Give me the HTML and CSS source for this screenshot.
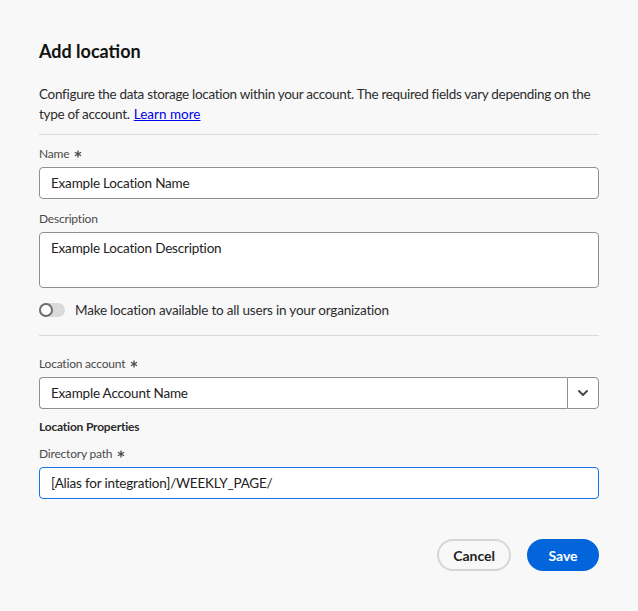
FILE: index.html
```html
<!DOCTYPE html>
<html lang="en">
<head>
    <meta charset="UTF-8">
    <meta name="viewport" content="width=device-width, initial-scale=1.0">
    <title>Add location</title>
    <link rel="stylesheet" href="styles.css">
</head>
<body>
    <div class="dialog">
        <h1 class="title">Add location</h1>
        <p class="intro">Configure the data storage location within your account. The required fields vary depending on the type of account. <a href="#">Learn more</a></p>
        <hr class="divider">

        <div class="field field-first">
            <label class="label" for="name">Name
                <svg class="req" width="8" height="8" viewBox="0 0 8 8"><path d="M4 0.5 V7.5 M0.9 2.2 L7.1 5.8 M0.9 5.8 L7.1 2.2" stroke="#4b4b4b" stroke-width="1.3" fill="none"/></svg>
            </label>
            <input class="textfield" type="text" id="name" value="Example Location Name">
        </div>

        <div class="field">
            <label class="label" for="desc">Description</label>
            <textarea class="textfield textarea" id="desc">Example Location Description</textarea>
        </div>

        <label class="switch-row">
            <span class="switch"><span class="knob"></span></span>
            <span>Make location available to all users in your organization</span>
        </label>

        <hr class="divider divider-low">

        <div class="field field-account">
            <label class="label" for="account">Location account
                <svg class="req" width="8" height="8" viewBox="0 0 8 8"><path d="M4 0.5 V7.5 M0.9 2.2 L7.1 5.8 M0.9 5.8 L7.1 2.2" stroke="#4b4b4b" stroke-width="1.3" fill="none"/></svg>
            </label>
            <div class="picker">
                <input class="picker-input" type="text" id="account" value="Example Account Name">
                <button class="picker-btn" type="button" aria-label="Show options">
                    <svg width="10" height="6" viewBox="0 0 10 6"><path d="M1 1 L5 5 L9 1" fill="none" stroke="#4b4b4b" stroke-width="2" stroke-linecap="round" stroke-linejoin="round"/></svg>
                </button>
            </div>
        </div>

        <h2 class="section">Location Properties</h2>

        <div class="field field-path">
            <label class="label" for="path">Directory path
                <svg class="req" width="8" height="8" viewBox="0 0 8 8"><path d="M4 0.5 V7.5 M0.9 2.2 L7.1 5.8 M0.9 5.8 L7.1 2.2" stroke="#4b4b4b" stroke-width="1.3" fill="none"/></svg>
            </label>
            <input class="textfield textfield-focus" type="text" id="path" value="[Alias for integration]/WEEKLY_PAGE/">
        </div>

        <div class="actions">
            <button class="btn btn-secondary" type="button">Cancel</button>
            <button class="btn btn-primary" type="button">Save</button>
        </div>
    </div>
</body>
</html>
```

FILE: styles.css
```css
body {
    margin: 0;
    background-color: #f8f8f8;
    font-family: Lato, "Open Sans", sans-serif;
    font-size: 13.5px;
    letter-spacing: -0.2px;
    color: #222222;
}
.dialog {
    padding: 40px 39px 0;
}
.title {
    margin: 0;
    font-size: 18px;
    line-height: 22px;
    font-weight: 700;
    letter-spacing: 0;
    color: #111111;
}
.intro {
    margin: 22px 0 0;
    line-height: 20px;
    letter-spacing: -0.3px;
    color: #2c2c2c;
}
.intro a {
    color: #0000ee;
    letter-spacing: 0;
    margin-left: 1px;
}
.divider {
    border: none;
    border-top: 1px solid #dadada;
    margin: 10px 0 0;
}
.divider-low {
    margin-top: 15px;
}
.field {
    margin-top: 12px;
}
.field-first {
    margin-top: 11px;
}
.field-account {
    margin-top: 20px;
}
.field-path {
    margin-top: 11px;
}
.label {
    display: block;
    font-size: 12px;
    line-height: 16px;
    height: 16px;
    color: #4b4b4b;
    margin-bottom: 5px;
}
.req {
    margin-left: 2px;
    vertical-align: 0;
}
.textfield {
    display: block;
    box-sizing: border-box;
    width: 100%;
    height: 32px;
    padding: 0 11px;
    border: 1px solid #8f8f8f;
    border-radius: 4px;
    background-color: #ffffff;
    font-family: inherit;
    font-size: 13.5px;
    letter-spacing: -0.2px;
    color: #222222;
    outline: none;
}
.textarea {
    height: 56px;
    padding-top: 5px;
    resize: none;
    line-height: 20px;
}
.textfield-focus {
    border-color: #1473e6;
}
.switch-row {
    display: flex;
    align-items: center;
    gap: 10px;
    margin-top: 12px;
    height: 20px;
    color: #2c2c2c;
}
.switch {
    position: relative;
    width: 26px;
    height: 14px;
    border-radius: 7px;
    background-color: #dadada;
}
.knob {
    position: absolute;
    left: 0;
    top: 0;
    box-sizing: border-box;
    width: 14px;
    height: 14px;
    border: 2px solid #6e6e6e;
    border-radius: 50%;
    background-color: #ffffff;
}
.picker {
    display: flex;
    height: 32px;
}
.picker-input {
    flex: 1;
    box-sizing: border-box;
    height: 32px;
    padding: 0 11px;
    border: 1px solid #8f8f8f;
    border-right: none;
    border-radius: 4px 0 0 4px;
    background-color: #ffffff;
    font-family: inherit;
    font-size: 13.5px;
    letter-spacing: -0.2px;
    color: #222222;
    outline: none;
}
.picker-btn {
    display: flex;
    align-items: center;
    justify-content: center;
    width: 32px;
    height: 32px;
    padding: 0;
    border: 1px solid #8f8f8f;
    border-radius: 0 4px 4px 0;
    background-color: #ffffff;
}
.section {
    margin: 10px 0 0;
    font-size: 12px;
    line-height: 16px;
    font-weight: 700;
    color: #2c2c2c;
}
.actions {
    display: flex;
    justify-content: flex-end;
    gap: 16px;
    margin-top: 40px;
}
.btn {
    height: 32px;
    min-width: 72px;
    padding: 0 14px;
    border-radius: 16px;
    font-family: inherit;
    font-size: 14px;
    font-weight: 700;
}
.btn-secondary {
    border: 2px solid #d5d5d5;
    background-color: transparent;
    color: #222222;
}
.btn-primary {
    border: 2px solid #0265dc;
    background-color: #0265dc;
    color: #ffffff;
}
```
